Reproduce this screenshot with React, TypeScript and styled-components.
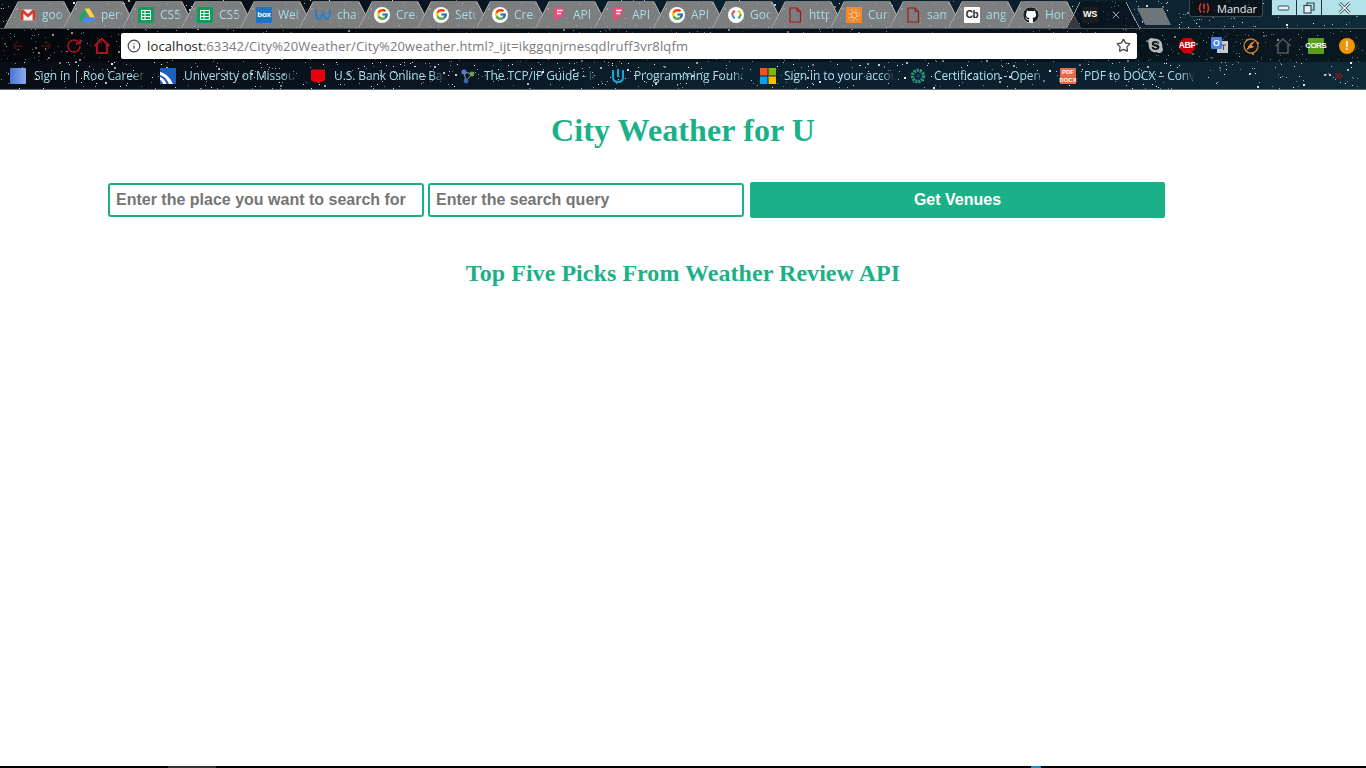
import type { ReactNode } from 'react';
import styled, { createGlobalStyle } from 'styled-components';
import { FaGithub, FaSkype } from 'react-icons/fa';
import { FcGoogle } from 'react-icons/fc';
import { Info, Star, X, ArrowLeft, ArrowRight, RotateCw, ChevronsRight } from 'lucide-react';

const GlobalStyle = createGlobalStyle`
	* {
		box-sizing: border-box;
	}
	html,
	body {
		margin: 0;
		height: 100%;
		overflow: hidden;
		background: #fff;
	}
	#root {
		height: 100%;
	}
`;

// seeded so the wallpaper stays the same on every run
const makeStars = (count: number, width: number, height: number, strength: number) => {
	let seed = 1337 + count;
	const rand = () => {
		seed = (seed * 16807) % 2147483647;
		return seed / 2147483647;
	};
	const out: string[] = [];
	for (let i = 0; i < count; i++) {
		const x = Math.round(rand() * width);
		const y = Math.round(rand() * height);
		const a = ((0.35 + rand() * 0.65) * strength).toFixed(2);
		const s = rand() > 0.88 ? 2 : 1;
		const c = `rgba(255,255,255,${a})`;
		out.push(`linear-gradient(${c},${c}) ${x}px ${y}px / ${s}px ${s}px no-repeat`);
	}
	return out.join(',');
};

const stars = makeStars(1800, 1366, 90, 1);
const tabSpeckle = makeStars(22, 74, 27, 0.45);

const Page = styled.div`
	height: 100%;
	display: flex;
	flex-direction: column;
	background: #fff;
`;

const Frame = styled.header`
	height: 90px;
	flex: none;
	display: flex;
	flex-direction: column;
	border-bottom: 1px solid #5d6f7c;
	background: ${stars}, linear-gradient(90deg, #090d14 0%, #0a1520 30%, #0c2230 55%, #0b1f2d 75%, #0f2a39 100%);
	font-family: 'Open Sans', 'Noto Sans', sans-serif;
`;

const TabStrip = styled.div`
	height: 28px;
	flex: none;
	display: flex;
	align-items: flex-end;
	padding-left: 4px;
	position: relative;
`;

const TabShape = styled.div<{ $active?: boolean }>`
	width: 74px;
	height: 27px;
	flex: none;
	margin-right: -15px;
	padding-left: 16px;
	display: flex;
	align-items: center;
	gap: 6px;
	overflow: hidden;
	clip-path: polygon(0 100%, 14px 0, calc(100% - 14px) 0, 100% 100%);
	background:
		${(p) => (p.$active ? '' : `${tabSpeckle},`)}
		linear-gradient(to bottom right, transparent 50%, #a3a5a6 50%, #a3a5a6 54%, transparent 54%) left / 14px 100% no-repeat,
		linear-gradient(to bottom left, transparent 50%, #a3a5a6 50%, #a3a5a6 54%, transparent 54%) right / 14px 100% no-repeat,
		${(p) => (p.$active ? 'rgba(8, 14, 20, 0.6)' : '#7c7e7f')};
`;

const TabTitle = styled.span`
	font-size: 12px;
	white-space: nowrap;
	width: 22px;
	overflow: hidden;
	color: #a9dbe9;
	-webkit-mask-image: linear-gradient(90deg, #000 80%, transparent);
	mask-image: linear-gradient(90deg, #000 80%, transparent);
`;

const TabClose = styled.span`
	display: flex;
	margin-left: 6px;
	color: #8fa6ad;
`;

const NewTab = styled.div`
	width: 34px;
	height: 17px;
	flex: none;
	margin-left: 12px;
	margin-bottom: 3px;
	background: #70757a;
	clip-path: polygon(0 0, 76% 0, 100% 100%, 24% 100%);
`;

const Profile = styled.div`
	position: absolute;
	top: 0;
	left: 1189px;
	width: 74px;
	height: 17px;
	display: flex;
	align-items: center;
	gap: 7px;
	padding-left: 8px;
	font-size: 11px;
	color: #e8eef0;
	background: rgba(10, 14, 18, 0.75);
	border: 1px solid #3c4850;
	border-top: none;
	border-radius: 0 0 3px 3px;
`;

const WindowControls = styled.div`
	position: absolute;
	top: 0;
	right: 0;
	display: flex;
	height: 16px;
`;

const WindowButton = styled.div<{ $w: number }>`
	width: ${(p) => p.$w}px;
	display: flex;
	align-items: center;
	justify-content: center;
	background: #b4e2ea;
	border-left: 1px solid #223038;
	border-bottom: 1px solid #223038;
	color: #33474f;
`;

const Toolbar = styled.div`
	height: 34px;
	flex: none;
	display: flex;
	align-items: center;
	padding: 0 11px 0 4px;
	background: rgba(0, 0, 0, 0.4);
	border-top: 1px solid #4c5458;
`;

const NavButton = styled.div<{ $tone: string }>`
	width: 28px;
	flex: none;
	display: flex;
	justify-content: center;
	color: ${(p) => p.$tone};
`;

const Omnibox = styled.div`
	width: 1016px;
	height: 26px;
	flex: none;
	margin-left: 5px;
	padding: 0 6px;
	display: flex;
	align-items: center;
	background: #fff;
	border-radius: 2px;
	font-size: 13px;
`;

const UrlText = styled.span`
	flex: 1;
	margin-left: 6px;
	white-space: nowrap;
	color: #7a7a7a;
	letter-spacing: 0.14px;

	b {
		font-weight: 400;
		color: #222;
	}
`;

const Extensions = styled.div`
	flex: 1;
	display: flex;
	align-items: center;
	justify-content: space-between;
	padding-left: 10px;
`;

const Badge = styled.div<{ $bg: string; $round?: boolean; $size?: number; $ink?: string }>`
	width: 16px;
	height: 16px;
	flex: none;
	display: flex;
	align-items: center;
	justify-content: center;
	background: ${(p) => p.$bg};
	border-radius: ${(p) => (p.$round ? '50%' : '1px')};
	color: ${(p) => p.$ink ?? '#fff'};
	font-family: 'Liberation Sans', sans-serif;
	font-weight: 700;
	font-size: ${(p) => p.$size ?? 9}px;
	line-height: 1;
	letter-spacing: -0.3px;
`;

const StopBadge = styled(Badge)`
	letter-spacing: -0.5px;
	clip-path: polygon(30% 0, 70% 0, 100% 30%, 100% 70%, 70% 100%, 30% 100%, 0 70%, 0 30%);
`;

const CorsBadge = styled(Badge)`
	letter-spacing: -0.6px;
`;

const PdfBadge = styled(Badge)`
	flex-direction: column;
	line-height: 8px;
	border-radius: 0;
	letter-spacing: 0;
`;

const BookmarkBar = styled.div`
	flex: 1;
	display: flex;
	align-items: center;
	padding-left: 10px;
	position: relative;
`;

const Bookmark = styled.div`
	width: 150px;
	flex: none;
	display: flex;
	align-items: center;
	gap: 8px;
	font-size: 12px;
	letter-spacing: -0.1px;
	color: #a9dcec;
`;

const BookmarkTitle = styled.span`
	flex: 0 0 111px;
	white-space: nowrap;
	overflow: hidden;
	-webkit-mask-image: linear-gradient(90deg, #000 88%, transparent);
	mask-image: linear-gradient(90deg, #000 88%, transparent);
`;

const MoreBookmarks = styled.div`
	position: absolute;
	right: 21px;
	top: 8px;
	display: flex;
	color: #8c1a1a;
`;

const Main = styled.main`
	flex: 1;
	color: #1ab188;
	font-family: 'Liberation Serif', 'Times New Roman', serif;
`;

const Title = styled.h1`
	margin: 22px 0 33px;
	font-size: 32px;
	line-height: 37px;
	font-weight: 700;
	letter-spacing: 0.11px;
	text-align: center;
`;

const SearchForm = styled.form`
	display: flex;
	align-items: center;
	padding-left: 108px;
`;

const SearchInput = styled.input`
	width: 316px;
	height: 34px;
	margin-right: 4px;
	padding: 0 6px;
	border: 2px solid #1ab188;
	border-radius: 3px;
	outline: none;
	background: #fff;
	font-family: 'Liberation Sans', Arial, sans-serif;
	font-size: 16px;
	font-weight: 700;

	&::placeholder {
		color: #757575;
		opacity: 1;
	}
`;

const SubmitButton = styled.button`
	width: 415px;
	height: 36px;
	margin-left: 2px;
	padding: 0;
	border: none;
	border-radius: 2px;
	background: #1ab188;
	color: #fff;
	font-family: 'Liberation Sans', Arial, sans-serif;
	font-size: 16px;
	font-weight: 700;
`;

const SubTitle = styled.h2`
	margin: 42px 0 0;
	font-size: 24px;
	line-height: 27px;
	font-weight: 700;
	letter-spacing: 0.05px;
	text-align: center;
`;

const Taskbar = styled.div`
	height: 2px;
	flex: none;
	background: linear-gradient(
		90deg,
		#000 168px,
		#333 168px,
		#333 216px,
		#000 216px,
		#000 1031px,
		#1b8fc9 1031px,
		#1b8fc9 1041px,
		#000 1041px
	);
`;

const GmailIcon = () => (
	<svg width="16" height="16" viewBox="0 0 16 16">
		<rect x="1" y="2.5" width="14" height="11" fill="#eee" />
		<path d="M1 2.5h2.2L8 7l4.8-4.5H15v11h-2.4V6.4L8 10.4 3.4 6.4v7.1H1z" fill="#d8392b" />
	</svg>
);

const DriveIcon = () => (
	<svg width="16" height="16" viewBox="0 0 16 16">
		<path d="M5.5 1.5h5L5 11 2.5 15 0 10.6z" fill="#1fa463" />
		<path d="M5.5 1.5h5l5.5 9.1h-5z" fill="#ffd04b" />
		<path d="M5 10.6h11L13.5 15H2.5z" fill="#4688f4" />
	</svg>
);

const SheetIcon = () => (
	<svg width="16" height="16" viewBox="0 0 16 16">
		<rect width="16" height="16" rx="1" fill="#0f9d58" />
		<path d="M3.5 3.5h9v9h-9zM3.5 6.5h9M3.5 9.500h9M7 3.500v9" fill="none" stroke="#fff" strokeWidth="1" />
	</svg>
);

const WeeblyIcon = () => (
	<svg width="16" height="16" viewBox="0 0 16 16">
		<path d="M1 3c0 6 1 9 3 9s3-3 4-6c1 3 2 6 4 6s3-3 3-9" fill="none" stroke="#2a7fc9" strokeWidth="2.2" />
	</svg>
);

const FoursquareIcon = () => (
	<svg width="16" height="16" viewBox="0 0 16 16">
		<path d="M3 1h10l-2 9H8l-4 5z" fill="#f94877" />
		<path d="M6 3.500h5.400M6 6.500h4" stroke="#fff" strokeWidth="1.6" />
	</svg>
);

const CloudIcon = () => (
	<Badge $bg="#fff" $round>
		<svg width="11" height="11" viewBox="0 0 11 11">
			<path d="M3.500 1.500 1 5.500" stroke="#ea4335" strokeWidth="2" />
			<path d="M1 5.500l2.500 4" stroke="#4285f4" strokeWidth="2" />
			<path d="M7.500 1.500 10 5.500" stroke="#fbbc05" strokeWidth="2" />
			<path d="M10 5.500l-2.500 4" stroke="#34a853" strokeWidth="2" />
		</svg>
	</Badge>
);

const GoogleIcon = () => (
	<Badge $bg="#fff" $round>
		<FcGoogle size={13} />
	</Badge>
);

const GithubIcon = () => (
	<Badge $bg="#fff" $round>
		<FaGithub size={16} color="#1b1f23" />
	</Badge>
);

const DocIcon = () => (
	<svg width="16" height="16" viewBox="0 0 16 16">
		<path d="M3 1h7l3.500 3.500V15H3z" fill="none" stroke="#a11616" strokeWidth="1.2" />
		<path d="M10 1v3.500h3.500" fill="none" stroke="#a11616" strokeWidth="1" />
	</svg>
);

const OrangeIcon = () => (
	<svg width="16" height="16" viewBox="0 0 16 16">
		<rect width="16" height="16" fill="#f08a2c" />
		<circle cx="8" cy="8" r="3" fill="none" stroke="#fbd9a8" strokeWidth="1.4" strokeDasharray="2 1" />
		<circle cx="8" cy="8" r="5.6" fill="none" stroke="#fbd9a8" strokeWidth="1" strokeDasharray="1.5 3" />
	</svg>
);

const MicrosoftIcon = () => (
	<svg width="16" height="16" viewBox="0 0 16 16">
		<rect width="7.5" height="7.5" fill="#f25022" />
		<rect x="8.5" width="7.5" height="7.5" fill="#7fba00" />
		<rect y="8.5" width="7.5" height="7.5" fill="#00a4ef" />
		<rect x="8.5" y="8.5" width="7.5" height="7.5" fill="#ffb900" />
	</svg>
);

const SwooshIcon = () => (
	<svg width="16" height="16" viewBox="0 0 16 16">
		<rect width="16" height="16" fill="#1d5fc0" />
		<path d="M0 4c5 1 10 5 13 12H9C7 11 4 8 0 7zM0 9c3 1 5 3 6.500 7H3C2.500 14 1.500 12.500 0 12z" fill="#fff" />
	</svg>
);

const ShieldIcon = () => (
	<svg width="16" height="16" viewBox="0 0 16 16">
		<path d="M1 1.500h14V11c0 2-3 3.500-7 3.500S1 13 1 11z" fill="#e8000d" />
	</svg>
);

const NetworkIcon = () => (
	<svg width="16" height="16" viewBox="0 0 16 16">
		<path d="M4 4l8 2M4 4l2 9M12 6l-6 7" stroke="#8fa6c8" strokeWidth="1" />
		<circle cx="4" cy="4" r="2.600" fill="#5a78c8" />
		<circle cx="12" cy="6" r="2.400" fill="#6aa84f" />
		<circle cx="6" cy="13" r="2.400" fill="#3c64a8" />
	</svg>
);

const UdacityIcon = () => (
	<svg width="16" height="16" viewBox="0 0 16 16">
		<path d="M3 2v7c0 3 2 5 5 5s5-2 5-5V2" fill="none" stroke="#12a8d8" strokeWidth="2" />
		<path d="M8 1v8" stroke="#12a8d8" strokeWidth="2" />
	</svg>
);

const RingIcon = () => (
	<svg width="16" height="16" viewBox="0 0 16 16">
		<circle cx="8" cy="8" r="5.500" fill="none" stroke="#2a9d78" strokeWidth="3.500" strokeDasharray="2 1" />
		<circle cx="8" cy="8" r="2" fill="#1c3c78" />
	</svg>
);

const HomeIcon = ({ tone, width }: { tone: string; width: number }) => (
	<svg width="18" height="18" viewBox="0 0 18 18">
		<path d="M1.500 9 9 2l7.500 7M4 7.500V16h10V7.500" fill="none" stroke={tone} strokeWidth={width} />
	</svg>
);

const TranslateIcon = () => (
	<svg width="17" height="17" viewBox="0 0 17 17">
		<rect x="6" y="4" width="11" height="12" fill="#c7cbd0" />
		<rect width="11" height="12" rx="1" fill="#4a86e8" />
		<circle cx="5.500" cy="6" r="2.500" fill="none" stroke="#fff" strokeWidth="1.200" />
		<path d="M10 8h5M12.500 8v5" stroke="#555" strokeWidth="1.200" />
	</svg>
);

const FlameIcon = () => (
	<svg width="16" height="16" viewBox="0 0 16 16">
		<circle cx="8" cy="8" r="7" fill="none" stroke="#d9801f" strokeWidth="1.300" />
		<path d="M12 3C8 4 5 7 4 13c1-2 2.500-3 4-3 2 0 2.500-1 3-2H8.500c1-2 2.500-3.500 3.500-5z" fill="#f08a2c" />
	</svg>
);

const AlertIcon = () => (
	<svg width="12" height="12" viewBox="0 0 12 12">
		<path d="M3 1.500C1 4 1 8 3 10.500M9 1.500c2 2.500 2 6.500 0 9" fill="none" stroke="#d83a2a" strokeWidth="1.500" />
		<path d="M6 1.500v5.500M6 8.500v2" stroke="#d83a2a" strokeWidth="1.700" />
	</svg>
);

const MinimizeIcon = () => (
	<svg width="14" height="8" viewBox="0 0 14 8">
		<rect x="1" y="2" width="11" height="4" rx="1.500" fill="#e4f3f6" stroke="#33474f" />
	</svg>
);

const RestoreIcon = () => (
	<svg width="12" height="12" viewBox="0 0 12 12">
		<path d="M4 3V1h7v7H8.500" fill="none" stroke="#33474f" strokeWidth="1.200" />
		<rect x="1" y="3.500" width="7" height="7.500" fill="#e4f3f6" stroke="#33474f" strokeWidth="1.200" />
	</svg>
);

const CloseIcon = () => (
	<svg width="13" height="12" viewBox="0 0 13 12">
		<path d="M1.500 1 11.500 11M11.500 1 1.500 11" stroke="#33474f" strokeWidth="3" />
		<path d="M1.500 1 11.500 11M11.500 1 1.500 11" stroke="#eef8fa" strokeWidth="1.400" />
	</svg>
);

type TabData = { icon: ReactNode; title: string };

const tabs: TabData[] = [
	{ icon: <GmailIcon />, title: 'google' },
	{ icon: <DriveIcon />, title: 'personal' },
	{ icon: <SheetIcon />, title: 'CS5' },
	{ icon: <SheetIcon />, title: 'CS5' },
	{ icon: <Badge $bg="#1c74c4" $size={8}>box</Badge>, title: 'Web' },
	{ icon: <WeeblyIcon />, title: 'chat' },
	{ icon: <GoogleIcon />, title: 'Create' },
	{ icon: <GoogleIcon />, title: 'Setup' },
	{ icon: <GoogleIcon />, title: 'Create' },
	{ icon: <FoursquareIcon />, title: 'API' },
	{ icon: <FoursquareIcon />, title: 'API' },
	{ icon: <GoogleIcon />, title: 'API' },
	{ icon: <CloudIcon />, title: 'Google' },
	{ icon: <DocIcon />, title: 'http' },
	{ icon: <OrangeIcon />, title: 'Currency' },
	{ icon: <DocIcon />, title: 'sample' },
	{ icon: <Badge $bg="#fff" $ink="#222" $size={10}>Cb</Badge>, title: 'angular' },
	{ icon: <GithubIcon />, title: 'Home' },
];

const bookmarks: { icon: ReactNode; title: string }[] = [
	{ icon: <Badge $bg="linear-gradient(90deg,#4a74d8,#8fa8ea)" />, title: 'Sign in | Roo Career Network' },
	{ icon: <SwooshIcon />, title: 'University of Missouri' },
	{ icon: <ShieldIcon />, title: 'U.S. Bank Online Banking' },
	{ icon: <NetworkIcon />, title: 'The TCP/IP Guide - Index' },
	{ icon: <UdacityIcon />, title: 'Programming Foundations' },
	{ icon: <MicrosoftIcon />, title: 'Sign in to your account' },
	{ icon: <RingIcon />, title: 'Certification - Open Edx' },
	{
		icon: (
			<PdfBadge $bg="#e8694a" $size={6}>
				<span>PDF</span>
				<span>DOCX</span>
			</PdfBadge>
		),
		title: 'PDF to DOCX – Convert',
	},
];

export default function App() {
	return (
		<Page>
			<GlobalStyle />
			<Frame>
				<TabStrip>
					{tabs.map((tab, i) => (
						<TabShape key={i}>
							{tab.icon}
							<TabTitle>{tab.title}</TabTitle>
						</TabShape>
					))}
					<TabShape $active>
						<Badge $bg="#1c1c1c" $size={9}>WS</Badge>
						<TabClose>
							<X size={12} />
						</TabClose>
					</TabShape>
					<NewTab />
					<Profile>
						<AlertIcon />
						Mandar
					</Profile>
					<WindowControls>
						<WindowButton $w={25}>
							<MinimizeIcon />
						</WindowButton>
						<WindowButton $w={25}>
							<RestoreIcon />
						</WindowButton>
						<WindowButton $w={45}>
							<CloseIcon />
						</WindowButton>
					</WindowControls>
				</TabStrip>
				<Toolbar>
					<NavButton $tone="#3a1216">
						<ArrowLeft size={16} />
					</NavButton>
					<NavButton $tone="#3a1216">
						<ArrowRight size={16} />
					</NavButton>
					<NavButton $tone="#a8141a">
						<RotateCw size={16} strokeWidth={2.5} />
					</NavButton>
					<NavButton $tone="#a8141a">
						<HomeIcon tone="#a8141a" width={2.2} />
					</NavButton>
					<Omnibox>
						<Info size={14} color="#444" />
						<UrlText>
							<b>localhost</b>:63342/City%20Weather/City%20weather.html?_ijt=ikggqnjrnesqdlruff3vr8lqfm
						</UrlText>
						<Star size={15} color="#444" strokeWidth={2} />
					</Omnibox>
					<Extensions>
						<FaSkype size={17} color="#b9b9b9" />
						<StopBadge $bg="#c8000a" $size={9}>ABP</StopBadge>
						<TranslateIcon />
						<FlameIcon />
						<HomeIcon tone="#55595c" width={1.6} />
						<CorsBadge $bg="#5a9e20" $size={8}>CORS</CorsBadge>
						<Badge $bg="#f29400" $round $size={12}>!</Badge>
					</Extensions>
				</Toolbar>
				<BookmarkBar>
					{bookmarks.map((b) => (
						<Bookmark key={b.title}>
							{b.icon}
							<BookmarkTitle>{b.title}</BookmarkTitle>
						</Bookmark>
					))}
					<MoreBookmarks>
						<ChevronsRight size={12} strokeWidth={3} />
					</MoreBookmarks>
				</BookmarkBar>
			</Frame>
			<Main>
				<Title>City Weather for U</Title>
				<SearchForm onSubmit={(e) => e.preventDefault()}>
					<SearchInput placeholder="Enter the place you want to search for" />
					<SearchInput placeholder="Enter the search query" />
					<SubmitButton type="submit">Get Venues</SubmitButton>
				</SearchForm>
				<SubTitle>Top Five Picks From Weather Review API</SubTitle>
			</Main>
			<Taskbar />
		</Page>
	);
}
